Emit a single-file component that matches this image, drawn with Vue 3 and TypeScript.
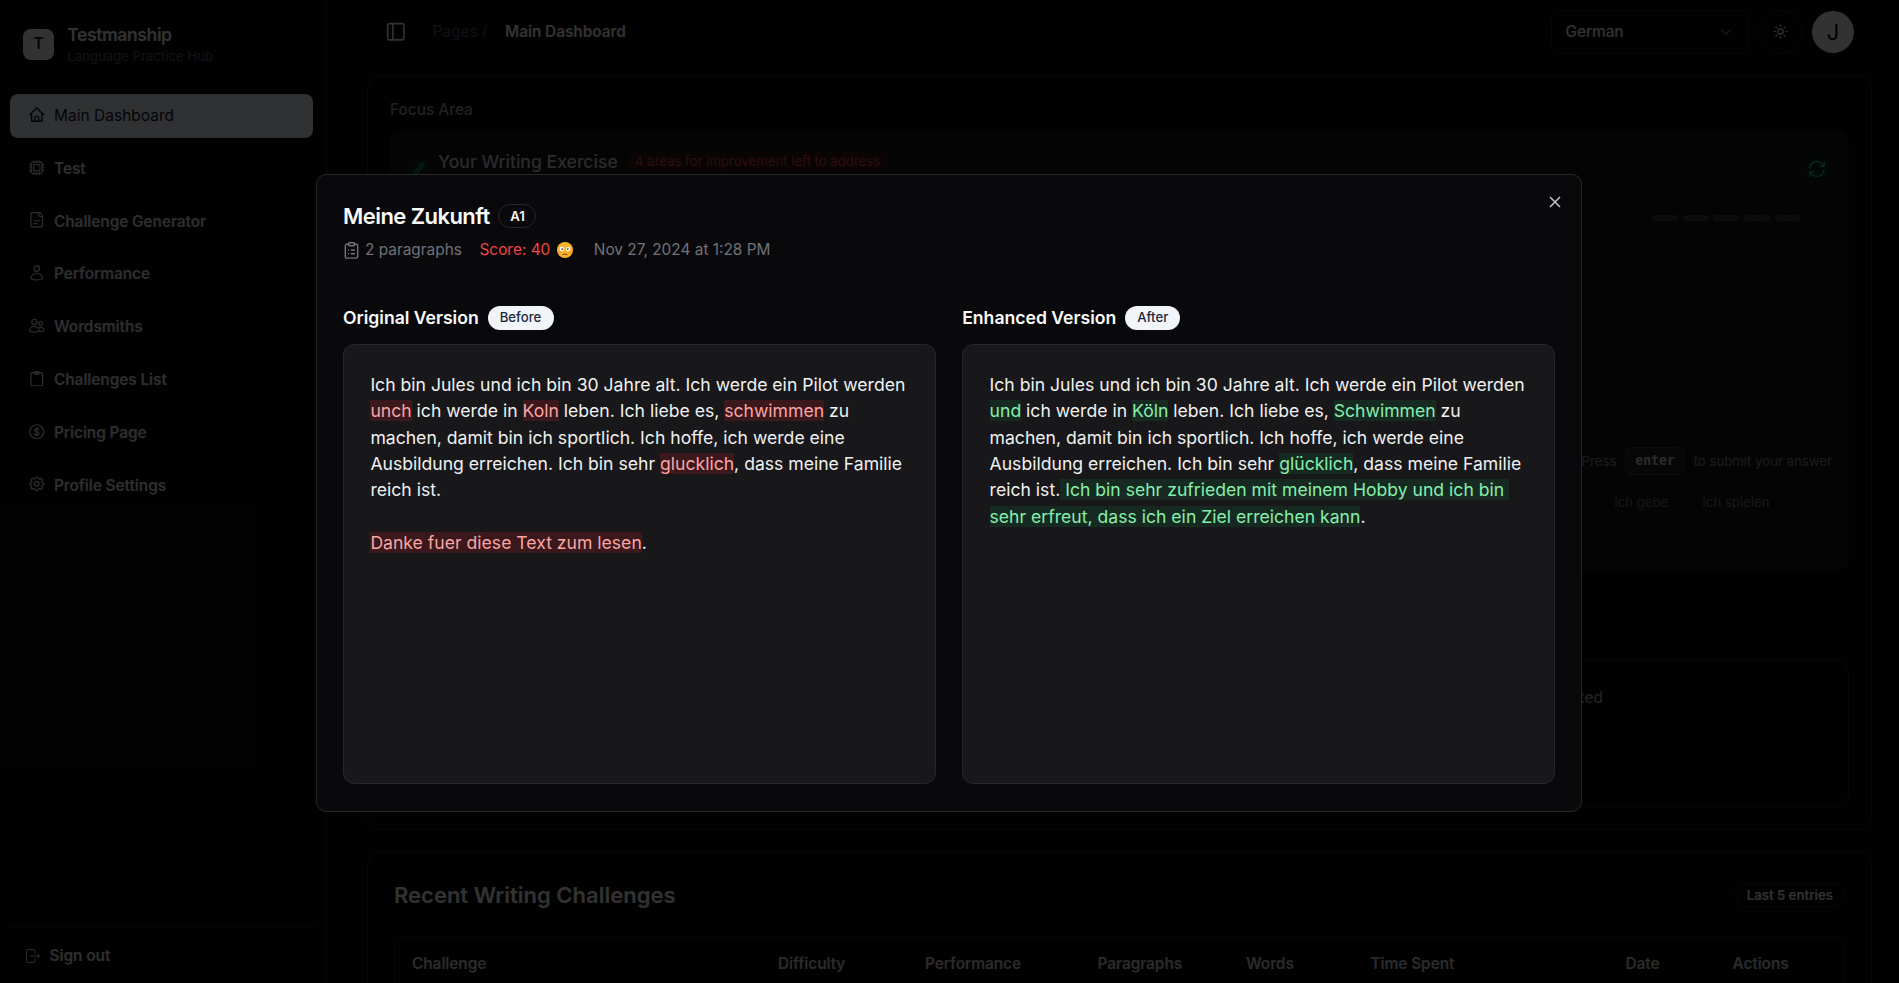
<script setup lang="ts">
interface NavItem {
  label: string
  icon: string
  active?: boolean
}

interface Chunk {
  text: string
  mark?: boolean
}

const navItems: NavItem[] = [
  { label: 'Main Dashboard', icon: 'home', active: true },
  { label: 'Test', icon: 'chip' },
  { label: 'Challenge Generator', icon: 'doc' },
  { label: 'Performance', icon: 'user' },
  { label: 'Wordsmiths', icon: 'users' },
  { label: 'Challenges List', icon: 'clipboard' },
  { label: 'Pricing Page', icon: 'dollar' },
  { label: 'Profile Settings', icon: 'gear' },
]

const columns: string[] = [
  'Challenge',
  'Difficulty',
  'Performance',
  'Paragraphs',
  'Words',
  'Time Spent',
  'Date',
  'Actions',
]

const original: Chunk[] = [
  { text: 'Ich bin Jules und ich bin 30 Jahre alt. Ich werde ein Pilot werden ' },
  { text: 'unch', mark: true },
  { text: ' ich werde in ' },
  { text: 'Koln', mark: true },
  { text: ' leben. Ich liebe es, ' },
  { text: 'schwimmen', mark: true },
  { text: ' zu machen, damit bin ich sportlich. Ich hoffe, ich werde eine Ausbildung erreichen. Ich bin sehr ' },
  { text: 'glucklich', mark: true },
  { text: ', dass meine Familie reich ist.\n\n' },
  { text: 'Danke fuer diese Text zum lesen', mark: true },
  { text: '.' },
]

const enhanced: Chunk[] = [
  { text: 'Ich bin Jules und ich bin 30 Jahre alt. Ich werde ein Pilot werden ' },
  { text: 'und', mark: true },
  { text: ' ich werde in ' },
  { text: 'Köln', mark: true },
  { text: ' leben. Ich liebe es, ' },
  { text: 'Schwimmen', mark: true },
  { text: ' zu machen, damit bin ich sportlich. Ich hoffe, ich werde eine Ausbildung erreichen. Ich bin sehr ' },
  { text: 'glücklich', mark: true },
  { text: ', dass meine Familie reich ist.' },
  { text: ' Ich bin sehr zufrieden mit meinem Hobby und ich bin sehr erfreut, dass ich ein Ziel erreichen kann', mark: true },
  { text: '.' },
]
</script>

<template>
  <div class="app">
    <aside class="sidebar">
      <div class="brand">
        <div class="brand-logo">T</div>
        <div class="brand-text">
          <div class="brand-name">Testmanship</div>
          <div class="brand-sub">Language Practice Hub</div>
        </div>
      </div>
      <nav class="nav">
        <a v-for="item in navItems" :key="item.label" class="nav-item" :class="{ active: item.active }">
          <svg class="nav-icon" viewBox="0 0 16 16" fill="none" stroke="currentColor" stroke-width="1.2" stroke-linecap="round" stroke-linejoin="round">
            <path v-if="item.icon === 'home'" stroke-width="1.5" d="M.8 8 8 .9 15.2 8M2.7 6.3v8.5h10.600V6.300M6 14.800v-3.400a2 2 0 0 1 4 0v3.400" />
            <template v-else-if="item.icon === 'chip'">
              <rect x="2.2" y="2.2" width="11.6" height="11.6" rx="1.8" />
              <rect x="4.7" y="4.7" width="6.6" height="6.6" />
              <path d="M5 .8v1.4M8 .8v1.4M11 .8v1.4M5 13.8v1.4M8 13.8v1.4M11 13.8v1.4M.8 5h1.4M.8 8h1.4M.8 11h1.4M13.8 5h1.4M13.8 8h1.4M13.8 11h1.4" />
            </template>
            <path v-else-if="item.icon === 'doc'" d="M9.5.7H3A1 1 0 0 0 2 1.7v12.6a1 1 0 0 0 1 1h10a1 1 0 0 0 1-1V5.2C14 2.600 12 .7 9.500.7ZM8.500.7c1 0 1.500.6 1.500 1.500v1c0 .9.5 1.300 1.300 1.300h1c1 0 1.700.6 1.700 1.500M5 9h6M5 12h3.500" />
            <template v-else-if="item.icon === 'user'">
              <circle cx="8" cy="3.6" r="2.9" />
              <path d="M8 8.500c-3 0-6 2.800-6 4.900 0 1.300 2.400 1.900 6 1.900s6-.6 6-1.900c0-2.100-3-4.900-6-4.900Z" />
            </template>
            <template v-else-if="item.icon === 'users'">
              <circle cx="5.5" cy="4" r="2.7" />
              <circle cx="12" cy="5.8" r="2" />
              <path d="M5.500 8.700c-2.800 0-4.900 2-4.900 3.900 0 1.300 1.900 1.900 4.900 1.900s4.900-.6 4.900-1.900c0-1.900-2.100-3.900-4.900-3.900ZM10 10c2.800-1.200 5.400.7 5.400 2.600 0 .9-1.600 1.400-4.400 1.300" />
            </template>
            <template v-else-if="item.icon === 'clipboard'">
              <rect x="2" y="1.7" width="12" height="13.6" rx="1.2" />
              <path d="M5 1.700C5.500.8 6.500.5 8 .5s2.500.3 3 1.200v1c0 .4-.3.600-.6.600H5.600c-.4 0-.6-.2-.6-.6Z" />
            </template>
            <template v-else-if="item.icon === 'dollar'">
              <circle cx="8" cy="8" r="7.2" />
              <path d="M8 3.600v8.800M10.300 6C10 5.100 9 4.700 8 4.700c-1.200 0-2.200.6-2.200 1.600C5.800 8.500 10.300 7.400 10.300 9.700c0 1-1 1.600-2.300 1.600-1.100 0-2.100-.5-2.400-1.400" />
            </template>
            <template v-else>
              <circle cx="8" cy="8" r="2.5" />
              <path d="M6.800 1h2.400l.5 1.700 1.200.5 1.600-.8 1.700 1.700-.9 1.500.5 1.200 1.600.5v1.500l-1.600.5-.5 1.200.8 1.600-1.600 1.600-1.600-.8-1.200.5L9.200 15H6.800l-.5-1.600-1.200-.5-1.600.8-1.600-1.600.8-1.600-.5-1.200L.7 8.800V7.300l1.500-.5.500-1.200-.8-1.500 1.600-1.700 1.600.8 1.200-.5Z" />
            </template>
          </svg>
          <span>{{ item.label }}</span>
        </a>
      </nav>
      <div class="signout">
        <svg viewBox="0 0 14 14" fill="none" stroke="currentColor" stroke-width="1" stroke-linecap="round" stroke-linejoin="round">
          <path d="M9 4.300V2A1.500 1.500 0 0 0 7.500.5H2.200A1.700 1.700 0 0 0 .5 2.200v9.600a1.700 1.700 0 0 0 1.700 1.700h5.300A1.500 1.500 0 0 0 9 12V9.700M4 7h9.400M11.400 5l2 2-2 2" />
        </svg>
        <span>Sign out</span>
      </div>
    </aside>

    <main class="main">
      <header class="topbar">
        <svg class="panel-icon" viewBox="0 0 24 24" fill="none" stroke="currentColor" stroke-width="2" stroke-linejoin="round">
          <rect x="2" y="2" width="20" height="20" rx="2" />
          <path d="M8.500 2v20" />
        </svg>
        <span class="crumb">Pages /</span>
        <span class="crumb-current">Main Dashboard</span>
        <div class="topbar-right">
          <div class="select">
            <span>German</span>
            <svg viewBox="0 0 12 8" fill="none" stroke="currentColor" stroke-width="1.2"><path d="m1 1.500 5 5 5-5" /></svg>
          </div>
          <div class="theme">
            <svg viewBox="0 0 16 16" fill="none" stroke="currentColor" stroke-width="1.3" stroke-linecap="round">
              <circle cx="8" cy="8" r="2.9" />
              <path d="M8 .9v1.600M8 13.500v1.600M.9 8h1.600M13.500 8h1.600M3 3l1.100 1.100M11.900 11.900 13 13M3 13l1.100-1.100M11.900 4.100 13 3" />
            </svg>
          </div>
          <div class="avatar">J</div>
        </div>
      </header>

      <section class="card focus">
        <h3 class="focus-title">Focus Area</h3>
        <div class="exercise">
          <div class="exercise-head">
            <div class="pencil">
              <svg viewBox="0 0 12 14" fill="none" stroke="currentColor" stroke-width="1" stroke-linejoin="round"><path d="M1 13l.7-3L8.800 1.500a1.200 1.200 0 0 1 1.900 1.600L3.600 11.700ZM7.700 2.900l1.900 1.600" /></svg>
            </div>
            <h2>Your Writing Exercise</h2>
            <span class="todo">4 areas for improvement left to address</span>
            <div class="refresh">
              <svg viewBox="0 0 16 16" fill="none" stroke="currentColor" stroke-width="1.4" stroke-linecap="round" stroke-linejoin="round"><path d="M.9 7.300A7.100 7.100 0 0 1 14.500 5M15.200 1v4.200H11M15.100 8.700A7.100 7.100 0 0 1 1.500 11M.8 15v-4.200H5" /></svg>
            </div>
          </div>
          <div class="dashes"><i v-for="n in 5" :key="n"></i></div>
          <div class="press"><span>Press</span><kbd>enter</kbd><span>to submit your answer</span></div>
          <div class="chips"><span>Ich gebe</span><span>Ich spielen</span></div>
        </div>
        <div class="status"><span>completed</span></div>
      </section>

      <section class="card recent">
        <div class="recent-head">
          <h2>Recent Writing Challenges</h2>
          <span class="entries">Last 5 entries</span>
        </div>
        <div class="table">
          <div class="thead"><span v-for="c in columns" :key="c">{{ c }}</span></div>
        </div>
      </section>
    </main>

    <div class="overlay">
      <div class="modal" role="dialog">
        <svg class="close" viewBox="0 0 12 12" fill="none" stroke="currentColor" stroke-width="1.5"><path d="m1 1 10 10M11 1 1 11" /></svg>
        <div class="modal-title">
          <h1>Meine Zukunft</h1>
          <span class="level">A1</span>
        </div>
        <div class="meta">
          <svg class="meta-icon" viewBox="0 0 15 17" fill="none" stroke="currentColor" stroke-width="1.4" stroke-linecap="round" stroke-linejoin="round">
            <rect x="4.6" y=".8" width="5.8" height="3" rx=".7" />
            <path d="M10.400 2.200h1.800a1.500 1.500 0 0 1 1.500 1.500v10.900a1.500 1.500 0 0 1-1.500 1.500H2.800a1.500 1.500 0 0 1-1.500-1.500V3.700a1.500 1.500 0 0 1 1.500-1.500h1.800M7.300 8h3.200M7.300 11.800h3.200M4.500 8h.01M4.500 11.800h.01" />
          </svg>
          <span class="paragraphs">2 paragraphs</span>
          <span class="score">Score: 40</span>
          <svg class="emoji" viewBox="0 0 16 16">
            <circle cx="8" cy="8" r="8" fill="#fdb42c" />
            <ellipse cx="2.8" cy="10.4" rx="1.9" ry="1.4" fill="#fb9a33" />
            <ellipse cx="13.2" cy="10.4" rx="1.9" ry="1.4" fill="#fb9a33" />
            <circle cx="4.8" cy="7" r="2.2" fill="#fff" />
            <circle cx="11.2" cy="7" r="2.200" fill="#fff" />
            <circle cx="5.2" cy="7.1" r=".85" fill="#422b0d" />
            <circle cx="10.8" cy="7.100" r=".85" fill="#422b0d" />
            <path d="M5.900 12.600q2.100-1.500 4.200 0" fill="none" stroke="#6b3d0c" stroke-width="1" stroke-linecap="round" />
          </svg>
          <span class="date">Nov 27, 2024 at 1:28 PM</span>
        </div>
        <div class="compare">
          <section>
            <div class="version"><h2>Original Version</h2><span class="pill">Before</span></div>
            <div class="text before"><span v-for="(c, i) in original" :key="i" :class="{ mark: c.mark }">{{ c.text }}</span></div>
          </section>
          <section>
            <div class="version"><h2>Enhanced Version</h2><span class="pill">After</span></div>
            <div class="text after"><span v-for="(c, i) in enhanced" :key="i" :class="{ mark: c.mark }">{{ c.text }}</span></div>
          </section>
        </div>
      </div>
    </div>
  </div>
</template>

<style>
html {
  font-size: 17.6px;
}
body {
  margin: 0;
  background: #000;
  overflow: hidden;
}
</style>

<style scoped>
.app,
.app * {
  box-sizing: border-box;
}
.app {
  position: relative;
  display: flex;
  width: 100vw;
  height: 100vh;
  overflow: hidden;
  background: #09090b;
  color: #fafafa;
  font-family: Inter, 'Liberation Sans', sans-serif;
  font-size: 15.4px;
  line-height: 22px;
}
h1,
h2,
h3 {
  margin: 0;
}
svg {
  display: block;
  flex: none;
}
.sidebar {
  display: flex;
  flex-direction: column;
  flex: none;
  width: 327px;
  border-right: 1px solid #27272a;
}
.brand {
  display: flex;
  align-items: center;
  gap: 13.2px;
  height: 88px;
  padding: 0 23px;
}
.brand-logo {
  display: grid;
  place-items: center;
  width: 31px;
  height: 31px;
  border-radius: 8px;
  background: #fafafa;
  color: #18181b;
  font-weight: 600;
}
.brand-name {
  font-size: 17.6px;
  font-weight: 600;
  line-height: 23px;
  letter-spacing: -0.44px;
}
.brand-sub {
  color: #64748b;
  opacity: 0.8;
  font-size: 13.2px;
  line-height: 20px;
}
.nav {
  display: flex;
  flex-direction: column;
  gap: 8.8px;
  padding: 6px 13px 0 10px;
}
.nav-item {
  display: flex;
  align-items: center;
  gap: 9.5px;
  height: 44px;
  padding-left: 19px;
  border-radius: 8px;
  color: #e4e4e7;
  font-weight: 600;
  letter-spacing: -0.07px;
}
.nav-item.active {
  background: #f1f5f9;
  color: #0f172a;
  font-weight: 400;
  letter-spacing: 0.07px;
}
.nav-icon {
  width: 15.5px;
  height: 15.5px;
  margin-top: -3px;
}
.signout {
  display: flex;
  align-items: center;
  gap: 9.5px;
  height: 57px;
  margin: auto 9px 0 6px;
  padding: 2px 0 0 20px;
  border-top: 1px solid #27272a;
  font-weight: 600;
  letter-spacing: -0.05px;
  color: #e4e4e7;
}
.signout svg {
  width: 14px;
  height: 14px;
}
.main {
  flex: 1;
  min-width: 0;
  padding: 0 27px 0 40px;
}
.topbar {
  display: flex;
  align-items: center;
  height: 66px;
  margin: 0 -10px 10px -10px;
  padding: 0 28px 2px 29px;
  border-bottom: 1px solid #131316;
}
.panel-icon {
  width: 19.5px;
  height: 19.5px;
  margin-right: 27px;
}
.crumb {
  width: 72.5px;
  color: #64748b;
  opacity: 0.75;
}
.crumb-current {
  font-weight: 600;
  letter-spacing: -0.05px;
}
.topbar-right {
  display: flex;
  align-items: center;
  gap: 9.5px;
  margin-left: auto;
}
.select {
  display: flex;
  align-items: center;
  justify-content: space-between;
  width: 198px;
  height: 44px;
  padding: 0 16px 0 13.5px;
  border: 1px solid #27272a;
  border-radius: 9px;
  font-weight: 500;
  letter-spacing: -0.05px;
}
.select svg {
  width: 12px;
  height: 8px;
  opacity: 0.5;
}
.theme {
  display: grid;
  place-items: center;
  width: 44px;
  height: 44px;
  border: 1px solid #27272a;
  border-radius: 50%;
}
.theme svg {
  width: 15px;
  height: 15px;
}
.avatar {
  display: grid;
  place-items: center;
  width: 42px;
  height: 42px;
  border-radius: 50%;
  background: #fafafa;
  color: #09090b;
  font-size: 22px;
}
.card {
  border: 1px solid #27272a;
  border-radius: 13px;
}
.focus {
  height: 754px;
  padding: 22px 22px 22px;
}
.focus-title {
  color: #a1a1aa;
  font-size: 15.4px;
  font-weight: 500;
}
.exercise {
  display: flex;
  flex-direction: column;
  height: 441px;
  margin-top: 9px;
  padding: 20px 17px 18px;
  border-radius: 13px;
  background: #18181b;
}
.exercise-head {
  display: flex;
  height: 48px;
}
.pencil {
  display: grid;
  place-items: center;
  width: 23px;
  height: 23px;
  margin-top: 8px;
  border-radius: 50%;
  background: #0f2a22;
  color: #10b981;
}
.pencil svg {
  width: 13px;
  height: 15px;
}
.exercise-head h2 {
  margin: 0 9.5px 0 8px;
  font-size: 17.6px;
  font-weight: 500;
  line-height: 23px;
  color: #d4d4d8;
}
.todo {
  height: 21px;
  margin-top: 1px;
  padding: 0 9px 0 7.5px;
  border-radius: 11px;
  background: #34151a;
  color: #dc4a4a;
  font-size: 13.2px;
  line-height: 21px;
}
.refresh {
  display: grid;
  place-items: center;
  width: 31px;
  height: 31px;
  margin: 3.5px 0 0 auto;
  border-radius: 50%;
  background: #11211f;
  color: #12c98d;
}
.refresh svg {
  width: 16px;
  height: 16px;
}
.dashes {
  display: flex;
  justify-content: flex-end;
  gap: 4.8px;
  margin: 17px 31px 0 0;
}
.dashes i {
  width: 26px;
  height: 6px;
  border-radius: 3px;
  background: #3f3f45;
}
.press {
  display: flex;
  align-items: center;
  justify-content: flex-end;
  gap: 8.8px;
  margin-top: 226px;
  color: #8b8b93;
  font-size: 13.2px;
}
kbd {
  height: 28px;
  padding: 0 9px;
  border: 1px solid #3f3f46;
  border-radius: 7px;
  background: #27272a;
  color: #d4d4d8;
  font-family: 'DejaVu Sans Mono', monospace;
  font-size: 13.2px;
  font-weight: 700;
  line-height: 26px;
}
.chips {
  display: flex;
  justify-content: flex-end;
  gap: 9px;
  margin: 13px 50px 0 0;
}
.chips span {
  height: 29px;
  padding: 0 11.5px;
  border: 1px solid #27272a;
  border-radius: 15px;
  color: #71717a;
  font-size: 13.2px;
  line-height: 27px;
}
.status {
  height: 148px;
  margin-top: 88px;
  padding: 27px 245px 0 0;
  border: 1px solid #27272a;
  border-radius: 13px;
  color: #a1a1aa;
  font-weight: 500;
  text-align: right;
}
.recent {
  height: 300px;
  margin-top: 22px;
  padding: 26px;
}
.recent-head {
  display: flex;
  align-items: center;
  justify-content: space-between;
  height: 32px;
}
.recent-head h2 {
  font-size: 22px;
  font-weight: 600;
}
.entries {
  height: 24px;
  padding: 0 11px;
  border: 1px solid #27272a;
  border-radius: 12px;
  font-size: 13.2px;
  font-weight: 600;
  line-height: 22px;
}
.table {
  height: 240px;
  margin-top: 26px;
  border: 1px solid #27272a;
  border-radius: 9px;
}
.thead {
  display: grid;
  grid-template-columns: 366px 147px 172.5px 148.5px 124.5px 255px 107px 1fr;
  padding-left: 17px;
  color: #d4d4d8;
  font-weight: 600;
  letter-spacing: -0.07px;
  line-height: 52px;
}
.overlay {
  position: absolute;
  inset: 0;
  background: rgba(0, 0, 0, 0.8);
}
.modal {
  position: relative;
  width: 1266.8px;
  height: 638px;
  margin: 174px 0 0 315.6px;
  padding: 26.4px;
  border: 1px solid #27272a;
  border-radius: 10px;
  background: #09090b;
}
.close {
  position: absolute;
  top: 21px;
  right: 20.5px;
  width: 12px;
  height: 12px;
  color: #c4c4c6;
}
.modal-title {
  display: flex;
  align-items: center;
  gap: 8.8px;
  height: 30px;
}
.modal-title h1 {
  font-size: 22px;
  font-weight: 600;
  letter-spacing: -0.55px;
}
.level {
  height: 24px;
  padding: 0 10.7px;
  border: 1px solid #27272a;
  border-radius: 12px;
  font-size: 13.2px;
  font-weight: 600;
  line-height: 22px;
}
.meta {
  display: flex;
  align-items: center;
  height: 22px;
  margin-top: 8px;
  color: #71717a;
}
.meta-icon {
  width: 15px;
  height: 17px;
  margin: 0 6px 0 1px;
}
.score {
  margin: 0 7px 0 17.6px;
  color: #ef4444;
}
.emoji {
  width: 16px;
  height: 16px;
  margin-right: 20.5px;
}
.compare {
  display: grid;
  grid-template-columns: 1fr 1fr;
  gap: 26.4px;
  margin-top: 44px;
}
.version {
  display: flex;
  align-items: center;
  gap: 8.8px;
  height: 26px;
  margin-bottom: 13px;
}
.version h2 {
  font-size: 17.6px;
  font-weight: 600;
}
.pill {
  height: 24px;
  padding: 0 12.2px;
  border-radius: 12px;
  background: #f1f5f9;
  color: #1e293b;
  font-size: 13.2px;
  font-weight: 500;
  line-height: 23px;
}
.text {
  height: 440px;
  padding: 26.4px;
  border: 1px solid #27272a;
  border-radius: 11px;
  background: #18181b;
  color: #f0f0f0;
  font-size: 17.6px;
  line-height: 26.4px;
  white-space: pre-wrap;
}
.before .mark {
  background: #3a181b;
  color: #fca5a5;
}
.after .mark {
  background: #172a22;
  color: #86efac;
}
</style>
